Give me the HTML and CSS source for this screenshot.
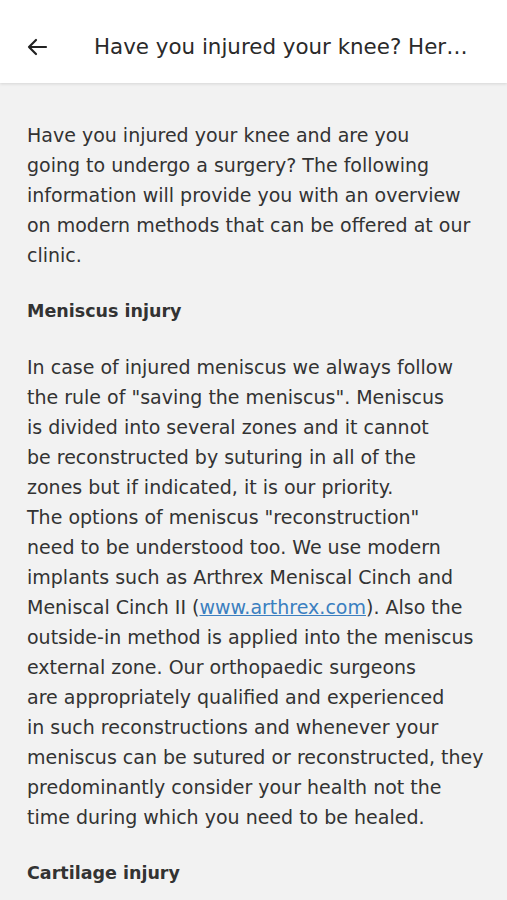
FILE: index.html
```html
<!DOCTYPE html>
<html>
<head>
<meta charset="utf-8">
<link rel="stylesheet" href="styles.css">
</head>
<body>
<header class="bar">
  <span class="back">
    <svg width="22" height="18" viewBox="0 0 22 18"><path d="M20 9H3M10 2L3 9l7 7" fill="none" stroke="#222" stroke-width="2.2" stroke-linecap="round" stroke-linejoin="round"/></svg>
  </span>
  <h1 class="title">Have you injured your knee? Her…</h1>
</header>
<main class="content">
  <p class="para">Have you injured your knee and are you<br>going to undergo a surgery? The following<br>information will provide you with an overview<br>on modern methods that can be offered at our<br>clinic.</p>
  <h2 class="head">Meniscus injury</h2>
  <p class="para">In case of injured meniscus we always follow<br>the rule of "saving the meniscus". Meniscus<br>is divided into several zones and it cannot<br>be reconstructed by suturing in all of the<br>zones but if indicated, it is our priority.<br>The options of meniscus "reconstruction"<br>need to be understood too. We use modern<br>implants such as Arthrex Meniscal Cinch and<br>Meniscal Cinch II (<a class="link" href="#">www.arthrex.com</a>). Also the<br>outside-in method is applied into the meniscus<br>external zone. Our orthopaedic surgeons<br>are appropriately qualified and experienced<br>in such reconstructions and whenever your<br>meniscus can be sutured or reconstructed, they<br>predominantly consider your health not the<br>time during which you need to be healed.</p>
  <h2 class="head">Cartilage injury</h2>
</main>
</body>
</html>
```
FILE: styles.css
```css
html, body {
  margin: 0;
  padding: 0;
  background: #f2f2f2;
  font-family: "DejaVu Sans", sans-serif;
  color: #333;
}
.bar {
  height: 83px;
  box-sizing: border-box;
  padding-top: 10px;
  background: #fff;
  display: flex;
  align-items: center;
  box-shadow: 0 1px 3px rgba(0,0,0,0.12);
}
.back {
  width: 94px;
  display: flex;
  padding-left: 26px;
  box-sizing: border-box;
}
.title {
  margin: 0;
  font-size: 21.4px;
  font-weight: normal;
  color: #2a2a2a;
  white-space: nowrap;
}
.content {
  padding: 37px 27px 0;
}
.para {
  margin: 0 0 26px;
  font-size: 19px;
  line-height: 30px;
  white-space: nowrap;
}
.head {
  margin: 0 0 26px;
  font-size: 17.5px;
  line-height: 30px;
  font-weight: bold;
}
.link {
  color: #3b7fc0;
  text-decoration: underline;
}
```
